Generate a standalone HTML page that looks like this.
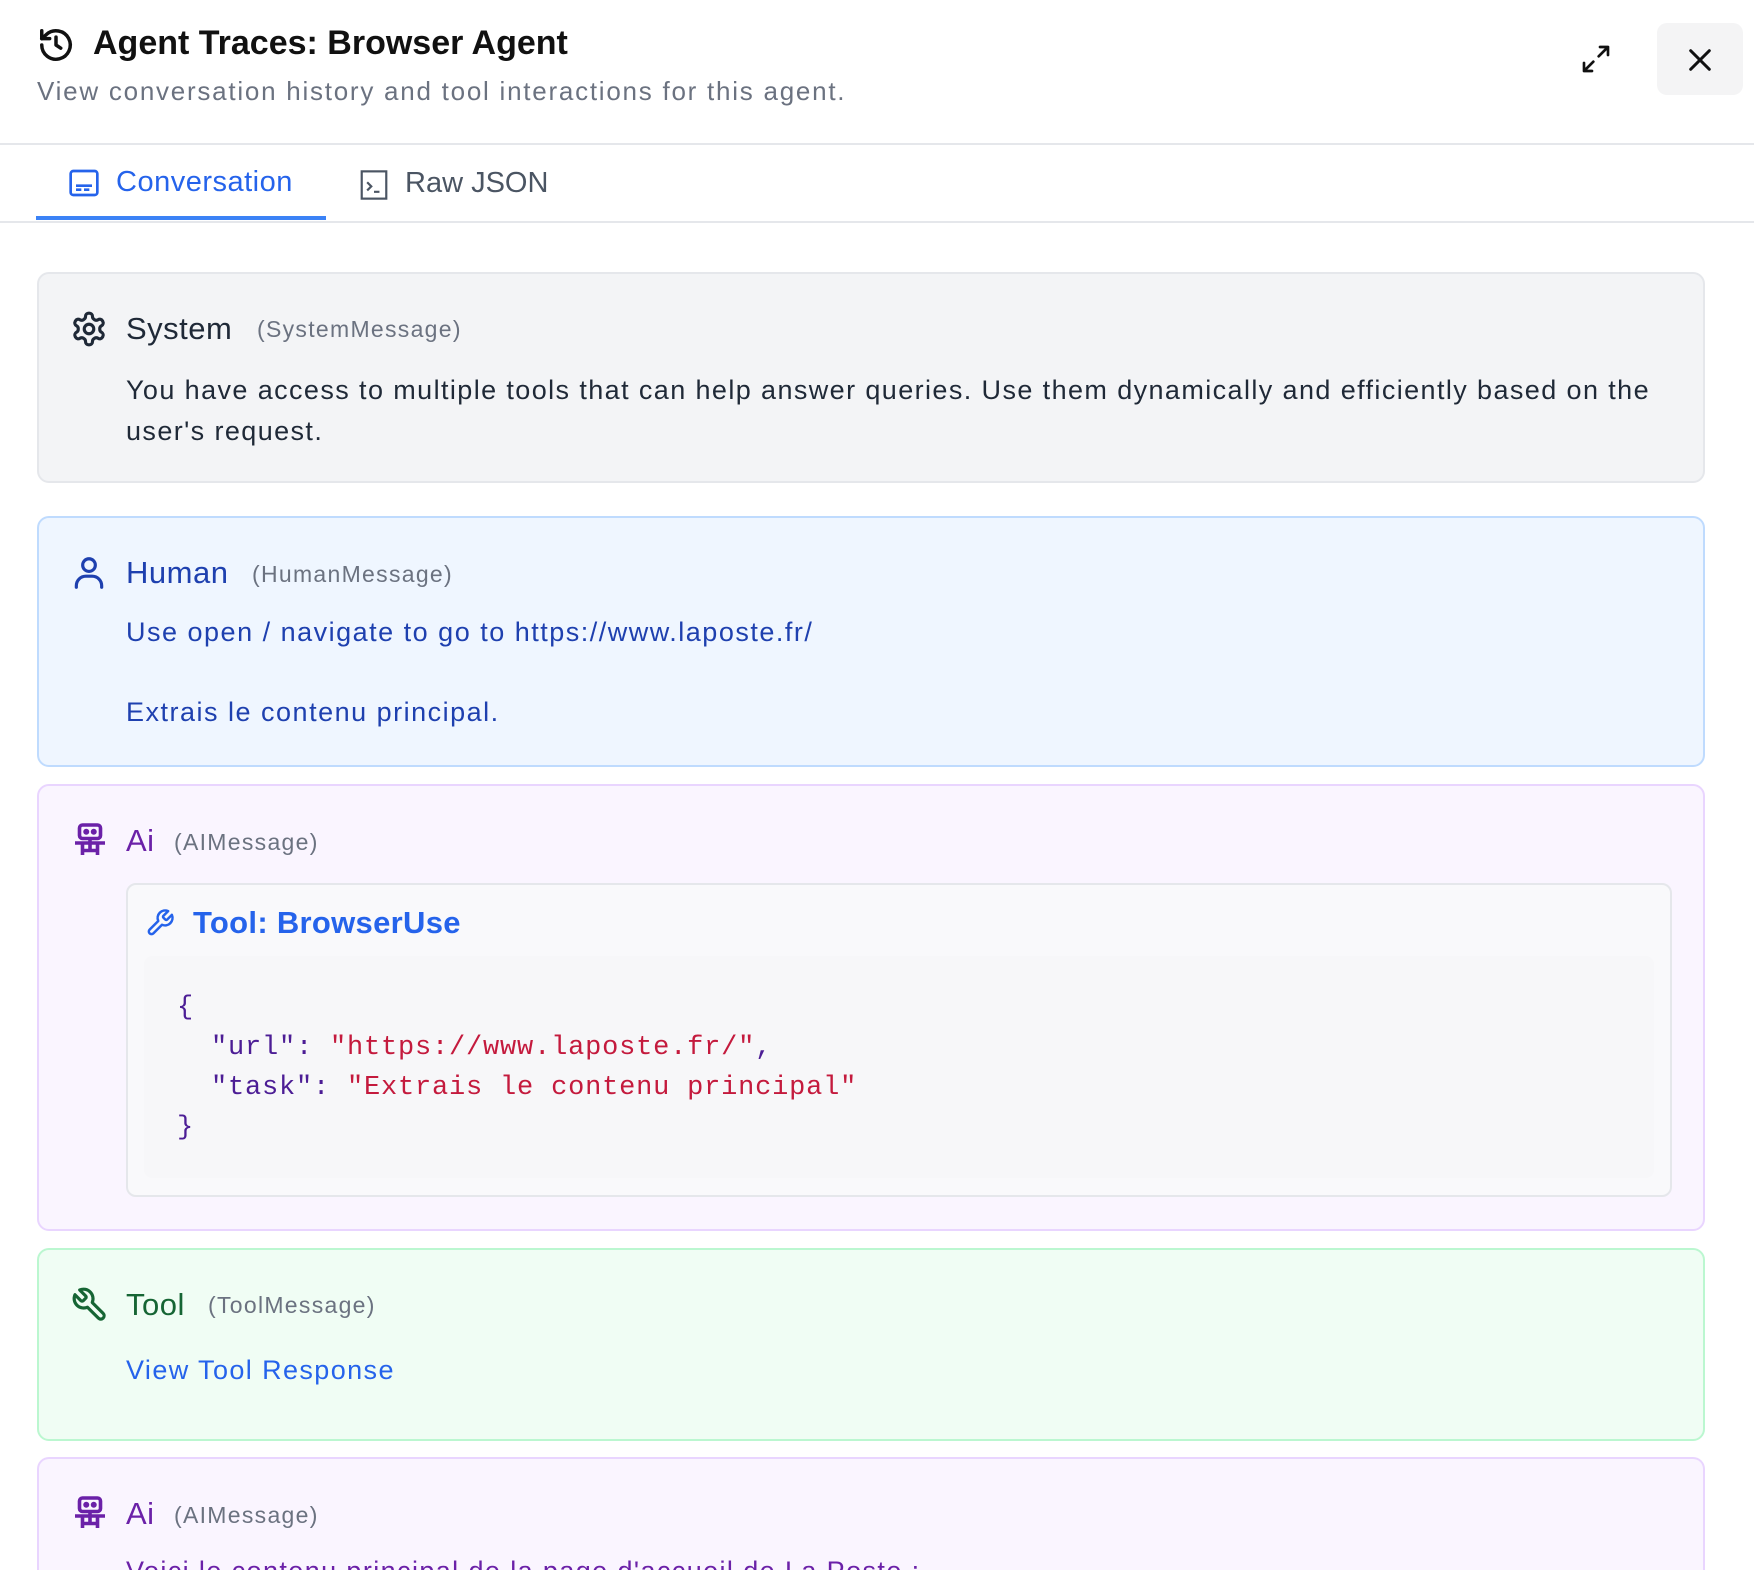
<!DOCTYPE html>
<html style="width:1754px;height:1570px;overflow:hidden"><head><meta charset="utf-8"><style>
*{box-sizing:border-box;margin:0;padding:0}
body{width:1754px;height:1570px;overflow:hidden;background:#fff;font-family:"Liberation Sans",sans-serif;position:relative}
.a{position:absolute;white-space:nowrap}
.card{position:absolute;left:37px;width:1668px;border:2px solid;border-radius:12px}
.lbl{font-size:31px;letter-spacing:0.5px}
.sub{font-size:23px;color:#6b7280;letter-spacing:1.3px}
.txt{font-size:27px;letter-spacing:1.4px}
svg{position:absolute}
.mono{font-family:"Liberation Mono",monospace;font-size:27px;letter-spacing:0.8px}
</style></head><body>
<svg style="left:37px;top:26px" width="38" height="38" viewBox="0 0 24 24" fill="none" stroke="#111" stroke-width="2.2" stroke-linecap="round" stroke-linejoin="round"><path d="M3 12a9 9 0 1 0 3-6.7L3 8"/><path d="M3 3v5h5"/><path d="M12 7v5l3 2"/></svg>
<div class="a" style="left:93px;top:24px;font-size:34px;font-weight:bold;color:#111">Agent Traces: Browser Agent</div>
<div class="a" style="left:37px;top:76px;font-size:26px;color:#6b7280;letter-spacing:1.75px">View conversation history and tool interactions for this agent.</div>
<svg style="left:1580px;top:43px" width="32" height="32" viewBox="0 0 24 24" fill="none" stroke="#111" stroke-width="2" stroke-linecap="round" stroke-linejoin="round"><path d="M15 3h6v6M21 3l-7 7M9 21H3v-6M3 21l7-7"/></svg>
<div style="position:absolute;left:1657px;top:23px;width:86px;height:72px;background:#f4f4f5;border-radius:10px"></div>
<svg style="left:1684px;top:44px" width="32" height="32" viewBox="0 0 24 24" fill="none" stroke="#111" stroke-width="2.2" stroke-linecap="round"><path d="M5 5l14 14M19 5L5 19"/></svg>
<div style="position:absolute;left:0;top:143px;width:1754px;height:2px;background:#e5e7eb"></div>
<div style="position:absolute;left:0;top:221px;width:1754px;height:2px;background:#e5e7eb"></div>
<div style="position:absolute;left:36px;top:216px;width:290px;height:4px;background:#3b82f6"></div>
<svg style="left:68px;top:168px" width="32" height="30" viewBox="0 0 24 22" fill="none" stroke="#2563eb" stroke-width="2"><rect x="2" y="2" width="20" height="18" rx="2"/><path d="M6 13h12M6 16h4M12 16h4"/></svg>
<div class="a" style="left:116px;top:166px;font-size:29px;color:#2563eb;letter-spacing:0.5px">Conversation</div>
<svg style="left:360px;top:170px" width="28" height="30" viewBox="0 0 20 22" fill="none" stroke="#4b5563" stroke-width="1.6"><rect x="1" y="1" width="18" height="20"/><path d="M5 9l3 3-3 3M10 16h4"/></svg>
<div class="a" style="left:405px;top:167px;font-size:29px;color:#4b5563">Raw JSON</div>

<div class="card" style="top:272px;height:211px;background:#f3f4f6;border-color:#e5e7eb"></div>
<svg style="left:70px;top:310px" width="38" height="38" viewBox="0 0 24 24" fill="none" stroke="#1f2937" stroke-width="2" stroke-linejoin="round"><path d="M12.2 2h-.4a2 2 0 0 0-2 2v.2a2 2 0 0 1-1 1.7l-.4.3a2 2 0 0 1-2 0l-.2-.1a2 2 0 0 0-2.7.7l-.2.4a2 2 0 0 0 .7 2.7l.2.1a2 2 0 0 1 1 1.7v.5a2 2 0 0 1-1 1.8l-.2.1a2 2 0 0 0-.7 2.7l.2.4a2 2 0 0 0 2.7.7l.2-.1a2 2 0 0 1 2 0l.4.3a2 2 0 0 1 1 1.7v.2a2 2 0 0 0 2 2h.4a2 2 0 0 0 2-2v-.2a2 2 0 0 1 1-1.7l.4-.3a2 2 0 0 1 2 0l.2.1a2 2 0 0 0 2.7-.7l.2-.4a2 2 0 0 0-.7-2.7l-.2-.1a2 2 0 0 1-1-1.8v-.5a2 2 0 0 1 1-1.7l.2-.1a2 2 0 0 0 .7-2.7l-.2-.4a2 2 0 0 0-2.7-.7l-.2.1a2 2 0 0 1-2 0l-.4-.3a2 2 0 0 1-1-1.7V4a2 2 0 0 0-2-2z"/><circle cx="12" cy="12" r="3"/></svg>
<div class="a lbl" style="left:126px;top:311px;color:#1f2937">System</div>
<div class="a sub" style="left:257px;top:316px">(SystemMessage)</div>
<div class="a txt" style="left:126px;top:370px;color:#1f2937;line-height:41px">You have access to multiple tools that can help answer queries. Use them dynamically and efficiently based on the<br>user's request.</div>

<div class="card" style="top:516px;height:251px;background:#eff6ff;border-color:#bfdbfe"></div>
<svg style="left:70px;top:554px" width="38" height="38" viewBox="0 0 24 24" fill="none" stroke="#1e40af" stroke-width="2" stroke-linecap="round"><circle cx="12" cy="7" r="4"/><path d="M4 21v-1a6 6 0 0 1 6-6h4a6 6 0 0 1 6 6v1"/></svg>
<div class="a lbl" style="left:126px;top:555px;color:#1e40af">Human</div>
<div class="a sub" style="left:252px;top:561px">(HumanMessage)</div>
<div class="a txt" style="left:126px;top:617px;color:#1e40af;letter-spacing:1.5px">Use open / navigate to go to https://www.laposte.fr/</div>
<div class="a txt" style="left:126px;top:697px;color:#1e40af;letter-spacing:1.5px">Extrais le contenu principal.</div>

<div class="card" style="top:784px;height:447px;background:#faf5ff;border-color:#e9d5ff"></div>
<svg style="left:72px;top:822px" width="36" height="36" viewBox="0 0 24 24" fill="none" stroke="#6b21a8" stroke-width="2.4"><rect x="5" y="2" width="14" height="9" rx="2"/><path d="M2 14h20M12 11v7M7 14v8M17 14v8M7 19h10"/><circle cx="9.5" cy="6.5" r=".8" fill="#6b21a8"/><circle cx="14.5" cy="6.5" r=".8" fill="#6b21a8"/></svg>
<div class="a lbl" style="left:126px;top:823px;color:#6b21a8">Ai</div>
<div class="a sub" style="left:174px;top:829px">(AIMessage)</div>
<div style="position:absolute;left:126px;top:883px;width:1546px;height:314px;border:2px solid #e5e7eb;border-radius:10px;background:#f9f9fb"></div>
<svg style="left:145px;top:908px" width="30" height="30" viewBox="0 0 24 24" fill="none" stroke="#2563eb" stroke-width="2" stroke-linejoin="round"><path d="M14.7 6.3a1 1 0 0 0 0 1.4l1.6 1.6a1 1 0 0 0 1.4 0l3.8-3.8a6 6 0 0 1-7.9 7.9l-6.9 6.9a2.1 2.1 0 0 1-3-3l6.9-6.9a6 6 0 0 1 7.9-7.9z"/></svg>
<div class="a" style="left:193px;top:905px;font-size:31px;font-weight:bold;color:#2563eb;letter-spacing:0.3px">Tool: BrowserUse</div>
<div style="position:absolute;left:144px;top:956px;width:1510px;height:222px;background:#f7f7f9;border-radius:8px"></div>
<div class="a mono" style="left:177px;top:988px;line-height:40px;color:#4c1d95">{<br>&nbsp;&nbsp;"url": <span style="color:#c41a3d">"https://www.laposte.fr/"</span>,<br>&nbsp;&nbsp;"task": <span style="color:#c41a3d">"Extrais le contenu principal"</span><br>}</div>

<div class="card" style="top:1248px;height:193px;background:#f0fdf4;border-color:#bbf7d0"></div>
<svg style="left:71px;top:1286px" width="38" height="38" viewBox="0 0 24 24" fill="none" stroke="#166534" stroke-width="2" stroke-linejoin="round"><path d="M14.7 6.3a1 1 0 0 0 0 1.4l1.6 1.6a1 1 0 0 0 1.4 0l3.8-3.8a6 6 0 0 1-7.9 7.9l-6.9 6.9a2.1 2.1 0 0 1-3-3l6.9-6.9a6 6 0 0 1 7.9-7.9z" transform="scale(-1,1) translate(-24,0)"/></svg>
<div class="a lbl" style="left:126px;top:1287px;color:#166534">Tool</div>
<div class="a sub" style="left:208px;top:1292px">(ToolMessage)</div>
<div class="a txt" style="left:126px;top:1355px;color:#2563eb">View Tool Response</div>

<div class="card" style="top:1457px;height:113px;border-bottom:none;border-radius:12px 12px 0 0;background:#faf5ff;border-color:#e9d5ff"></div>
<svg style="left:72px;top:1495px" width="36" height="36" viewBox="0 0 24 24" fill="none" stroke="#6b21a8" stroke-width="2.4"><rect x="5" y="2" width="14" height="9" rx="2"/><path d="M2 14h20M12 11v7M7 14v8M17 14v8M7 19h10"/><circle cx="9.5" cy="6.5" r=".8" fill="#6b21a8"/><circle cx="14.5" cy="6.5" r=".8" fill="#6b21a8"/></svg>
<div class="a lbl" style="left:126px;top:1496px;color:#6b21a8">Ai</div>
<div class="a sub" style="left:174px;top:1502px">(AIMessage)</div>
<div style="position:absolute;left:126px;top:1556px;height:14px;width:1400px;overflow:hidden"><div class="a txt" style="left:0;top:0;color:#6b21a8">Voici le contenu principal de la page d'accueil de La Poste :</div></div>
</body></html>
